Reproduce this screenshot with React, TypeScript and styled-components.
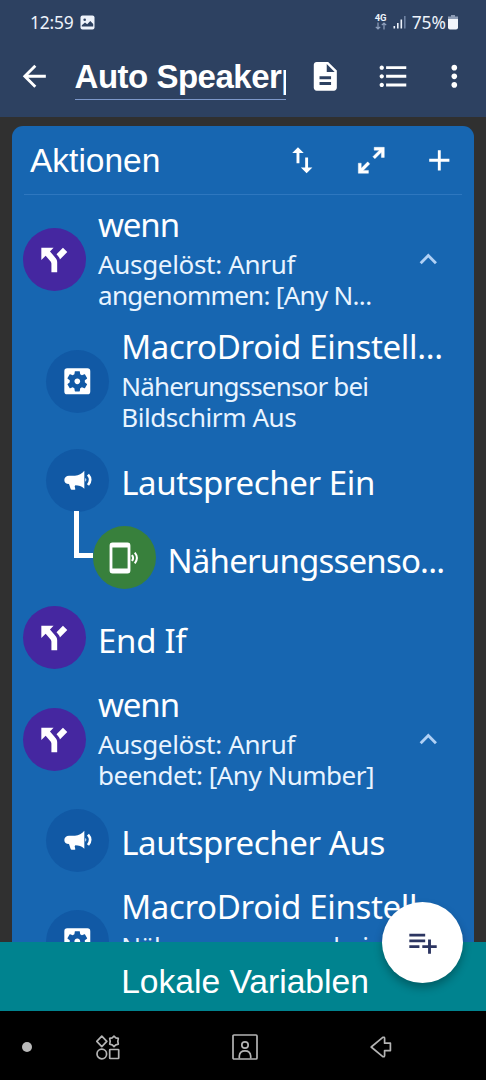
import React from 'react';
import styled, { createGlobalStyle } from 'styled-components';
import {
  MdAdd,
  MdArrowBack,
  MdDescription,
  MdExpandLess,
  MdFormatListBulleted,
  MdImportExport,
  MdMoreVert,
  MdPlaylistAdd,
  MdSettingsApplications,
} from 'react-icons/md';

const GlobalStyle = createGlobalStyle`
  * { box-sizing: border-box; }
  body { margin: 0; background: #000; }
  svg { display: block; flex: none; }
`;

const Screen = styled.div`
  position: relative;
  width: 486px;
  height: 1080px;
  display: flex;
  flex-direction: column;
  overflow: hidden;
  background: #303030;
  color: #fff;
  font-family: 'Noto Sans', sans-serif;
`;

const Header = styled.header`
  flex: none;
  height: 117px;
  background: #2d4161;
`;

const StatusBar = styled.div`
  display: flex;
  align-items: center;
  justify-content: space-between;
  height: 38px;
  padding: 6px 28px 0 30px;
  font-size: 17.4px;
  line-height: 24px;
  color: #eef3fb;
`;

const StatusGroup = styled.div`
  display: flex;
  align-items: center;
  gap: 7px;
`;

const Clock = styled.span`
  letter-spacing: -0.2px;
`;

const Percent = styled.span`
  margin: 0 -5px 0 -2px;
`;

const Network = styled.span`
  display: flex;
  flex-direction: column;
  align-items: center;
  width: 14px;
  margin: 0 -2px 0 0;
  font: bold 9.5px/8px Roboto, sans-serif;
`;

const Toolbar = styled.div`
  display: flex;
  align-items: center;
  height: 77px;
  padding: 0 14px 0 17px;
`;

const TitleField = styled.div`
  width: 211px;
  height: 47px;
  margin: 0 22px 0 23px;
  overflow: hidden;
  white-space: nowrap;
  border-bottom: 1.5px solid #7c97c9;
  font: bold 33px/48px 'Liberation Sans', sans-serif;
  letter-spacing: -0.5px;
`;

const ToolbarIcons = styled.div`
  display: flex;
  align-items: center;
  gap: 34px;
  svg:last-child { margin-left: -8px; }
`;

const Main = styled.main`
  flex: 1;
  min-height: 0;
  padding: 8.5px 12px 0;
  overflow: hidden;
`;

const Card = styled.section`
  height: 900px;
  border-radius: 11px;
  background: #1766b1;
`;

const CardHeader = styled.div`
  display: flex;
  align-items: center;
  justify-content: space-between;
  height: 69.5px;
  margin: 0 12px;
  padding: 0 5px 0 6px;
  border-bottom: 1px solid #2e77bf;
`;

const CardTitle = styled.h2`
  margin: 0;
  padding-top: 2px;
  font: 33.5px/40px 'Liberation Sans', sans-serif;
`;

const CardTools = styled.div`
  display: flex;
  gap: 34px;
  padding-top: 1px;
`;

const List = styled.div`
  padding-top: 3px;
`;

const Row = styled.div<{ $height: number; $level: number }>`
  position: relative;
  display: flex;
  align-items: center;
  height: ${(p) => p.$height}px;
  padding-left: ${(p) => 11 + p.$level * 23.2}px;
`;

const Badge = styled.div<{ $color: string }>`
  display: flex;
  align-items: center;
  justify-content: center;
  flex: none;
  width: 63px;
  height: 63px;
  margin-right: 12px;
  border-radius: 50%;
  background: ${(p) => p.$color};
`;

const Texts = styled.div<{ $double: boolean }>`
  flex: 1;
  min-width: 0;
  white-space: nowrap;
  padding: ${(p) => (p.$double ? '0 0 7px' : '5px 0 0')};
`;

const RowTitle = styled.div<{ $spacing: number }>`
  font-size: 33px;
  line-height: 49px;
  letter-spacing: ${(p) => p.$spacing}px;
`;

const RowDetail = styled.div<{ $spacing: number }>`
  font-size: 26px;
  line-height: 31px;
  color: #e9f4ff;
  letter-spacing: ${(p) => p.$spacing}px;
`;

const Chevron = styled.div`
  margin-right: 28px;
  color: #b0d0f5;
`;

const Connector = styled.div`
  position: absolute;
  left: 62px;
  top: -7px;
  width: 19px;
  height: 47px;
  border: solid #fff;
  border-width: 0 0 5px 5px;
`;

const LocalVariables = styled.footer`
  flex: none;
  height: 69px;
  background: #00838f;
  padding: 1px 0 0 4px;
  text-align: center;
  font: 33.6px/78px 'Liberation Sans', sans-serif;
`;

const Fab = styled.button`
  position: absolute;
  left: 382px;
  top: 902px;
  width: 81px;
  height: 81px;
  padding: 0;
  display: flex;
  align-items: center;
  justify-content: center;
  border: 0;
  border-radius: 50%;
  background: #fff;
  color: #2c3561;
  box-shadow: 0 5px 9px rgba(0, 0, 0, 0.28);
`;

const NavBar = styled.nav`
  flex: none;
  display: flex;
  align-items: center;
  height: 69px;
  padding: 3px 0 0 22px;
  background: #000;
  svg { fill: none; stroke: #b4b4b4; stroke-width: 1.7; }
`;

const NavDot = styled.span`
  width: 10px;
  height: 10px;
  margin-right: 64px;
  border-radius: 50%;
  background: #bababa;
`;

const NavIcons = styled.div`
  display: flex;
  align-items: center;
  gap: 112px;
`;

const ICON = 34.6;

const ForkIcon = () => (
  <svg width={ICON} height={ICON} viewBox="0 0 24 24" fill="#fff">
    <path d="M3,4V12.5L6,9.5L9,13C10,14 10,15 10,15V21H14V14C14,14 14,13 13.47,12C12.94,11 12,10 12,10L9,6.58L11.5,4M18,4L13.54,8.47L14,9C14,9 14.93,10 15.47,11C15.68,11.4 15.8,11.79 15.87,12.13L21,7" />
  </svg>
);

const MegaphoneIcon = () => (
  <svg width="28" height="20" viewBox="0 0 84 60" fill="#fff">
    <path d="M61 2V56C53 48 44 46 34 46L32 49L34 58Q34 59 32 59H23Q21 59 20 57L15 42C6 42 1 38 1 30C1 22 7 17 15 17H33C44 16 54 11 61 2Z" />
    <path d="M64 24Q70 29 64 35Z" />
    <path d="M72 14Q85 29 72 45" fill="none" stroke="#fff" strokeWidth="8" />
  </svg>
);

const PhoneWavesIcon = () => (
  <svg width="30" height="32" viewBox="0 0 30 32" fill="none" stroke="#fff">
    <rect x="2" y="2" width="18" height="28" rx="1.5" strokeWidth="2.8" />
    <path d="M1.5 3.5H20.5M1.5 28.5H20.5" strokeWidth="4" />
    <path d="M23 13Q25.2 16 23 19" strokeWidth="2" />
    <path d="M25.8 10.7Q30 16 25.8 21.3" strokeWidth="2" />
  </svg>
);

const ExpandIcon = () => (
  <svg width={ICON} height={ICON} viewBox="0 0 24 24" fill="#fff" stroke="#fff" strokeWidth="0.3">
    <path d="M10,21V19H6.41L10.91,14.5L9.5,13.09L5,17.59V14H3V21H10M14.5,10.91L19,6.41V10H21V3H14V5H17.59L13.09,9.5L14.5,10.91Z" />
  </svg>
);

const PictureIcon = () => (
  <svg width="15" height="15" viewBox="0 0 15 15">
    <rect x="0.5" y="0.5" width="14" height="14" rx="2" fill="#eef3fb" />
    <circle cx="4.7" cy="4.8" r="1.3" fill="#2d4161" />
    <path d="M1.8 10.2L5 7.6L7.2 9.3L10.3 6L13.2 9V11.5H1.8Z" fill="#2d4161" />
  </svg>
);

const DataArrows = () => (
  <svg width="12" height="8" viewBox="0 0 12 8" fill="none" stroke="#8fa0bd" strokeWidth="1.2">
    <path d="M3 0.5V7M0.8 4.8L3 7L5.2 4.8M9 7.5V1M6.8 3.2L9 1L11.2 3.2" />
  </svg>
);

const SignalIcon = () => (
  <svg width="14" height="14" viewBox="0 0 14 14" fill="#eef3fb">
    <rect x="0.5" y="11" width="1.6" height="2.5" />
    <rect x="4" y="8" width="1.6" height="5.5" />
    <rect x="7.5" y="4.5" width="1.6" height="9" />
    <rect x="11" y="1" width="1.6" height="12.5" fill="#6f83a3" />
  </svg>
);

const BatteryIcon = () => (
  <svg width="10" height="15" viewBox="0 0 10 15">
    <path d="M3 0H7V1.5H10V4H0V1.5H3Z" fill="#8c9bb5" />
    <path d="M0 4H10V12.5Q10 14.5 8 14.5H2Q0 14.5 0 12.5Z" fill="#f2f5fa" />
  </svg>
);

const AppsIcon = () => (
  <svg width="24" height="25" viewBox="0 0 24 25" strokeLinejoin="round">
    <path d="M5.8 1.2L10.8 6.4L5.8 11.6L0.8 6.4Z" />
    <path d="M18 1.2L19.8 2.8L22.3 3.4L21.8 6.4L22.3 9.2L19.8 9.9L18 11.5L16.2 9.9L13.7 9.2L14.2 6.4L13.7 3.4L16.2 2.8Z" />
    <circle cx="5.8" cy="19" r="4.8" />
    <rect x="13.7" y="14.5" width="9" height="9" rx="0.6" />
  </svg>
);

const ContactIcon = () => (
  <svg width="26" height="26" viewBox="0 0 26 26">
    <rect x="1" y="1" width="24" height="24" rx="1" />
    <circle cx="13" cy="11" r="3.2" />
    <path d="M7.3 24.5V22Q7.8 16.8 13 16.8T18.7 22V24.5" />
  </svg>
);

const BackIcon = () => (
  <svg width="22" height="22" viewBox="0 0 22 22" strokeLinejoin="round">
    <path d="M1.2 11L12.8 1.4Q14.6 0.8 14.6 2.4V7.2H20.4V14.6H14.6V19.6Q14.6 21.2 12.8 20.6Z" />
  </svg>
);

const kinds = {
  fork: { color: '#4527a0', icon: <ForkIcon /> },
  gear: { color: '#1159a5', icon: <MdSettingsApplications size={ICON} /> },
  speaker: { color: '#1159a5', icon: <MegaphoneIcon /> },
  sensor: { color: '#38803c', icon: <PhoneWavesIcon /> },
};

interface Action {
  kind: keyof typeof kinds;
  level: number;
  height: number;
  title: string;
  spacing: number;
  details?: [string, number][];
  collapsible?: boolean;
  linked?: boolean;
}

const actions: Action[] = [
  { kind: 'fork', level: 0, height: 122, title: 'wenn', spacing: -1.1, collapsible: true, details: [['Ausgelöst: Anruf', -0.32], ['angenommen: [Any N...', -0.7]] },
  { kind: 'gear', level: 1, height: 122, title: 'MacroDroid Einstell...', spacing: -0.33, details: [['Näherungssensor bei', -0.82], ['Bildschirm Aus', -0.42]] },
  { kind: 'speaker', level: 1, height: 76, title: 'Lautsprecher Ein', spacing: -0.4 },
  { kind: 'sensor', level: 3, height: 79, title: 'Näherungssenso...', spacing: -0.8, linked: true },
  { kind: 'fork', level: 0, height: 81, title: 'End If', spacing: -0.3 },
  { kind: 'fork', level: 0, height: 122, title: 'wenn', spacing: -1.1, collapsible: true, details: [['Ausgelöst: Anruf', -0.32], ['beendet: [Any Number]', -0.5]] },
  { kind: 'speaker', level: 1, height: 80, title: 'Lautsprecher Aus', spacing: -0.4 },
  { kind: 'gear', level: 1, height: 122, title: 'MacroDroid Einstell...', spacing: -0.33, details: [['Näherungssensor bei', -0.82], ['Bildschirm Aus', -0.42]] },
];

const ActionRow = ({ action }: { action: Action }) => (
  <Row $height={action.height} $level={action.level}>
    {action.linked && <Connector />}
    <Badge $color={kinds[action.kind].color}>{kinds[action.kind].icon}</Badge>
    <Texts $double={!!action.details}>
      <RowTitle $spacing={action.spacing}>{action.title}</RowTitle>
      {action.details?.map(([text, spacing]) => (
        <RowDetail key={text} $spacing={spacing}>{text}</RowDetail>
      ))}
    </Texts>
    {action.collapsible && (
      <Chevron>
        <MdExpandLess size={ICON} />
      </Chevron>
    )}
  </Row>
);

export default function App() {
  return (
    <Screen>
      <GlobalStyle />
      <Header>
        <StatusBar>
          <StatusGroup>
            <Clock>12:59</Clock>
            <PictureIcon />
          </StatusGroup>
          <StatusGroup>
            <Network>
              4G
              <DataArrows />
            </Network>
            <SignalIcon />
            <Percent>75%</Percent>
            <BatteryIcon />
          </StatusGroup>
        </StatusBar>
        <Toolbar>
          <MdArrowBack size={ICON} />
          <TitleField>Auto Speakerphone</TitleField>
          <ToolbarIcons>
            <MdDescription size={ICON} />
            <MdFormatListBulleted size={ICON} />
            <MdMoreVert size={ICON} />
          </ToolbarIcons>
        </Toolbar>
      </Header>
      <Main>
        <Card>
          <CardHeader>
            <CardTitle>Aktionen</CardTitle>
            <CardTools>
              <MdImportExport size={ICON} />
              <ExpandIcon />
              <MdAdd size={ICON} />
            </CardTools>
          </CardHeader>
          <List>
            {actions.map((action, i) => (
              <ActionRow key={i} action={action} />
            ))}
          </List>
        </Card>
      </Main>
      <LocalVariables>Lokale Variablen</LocalVariables>
      <NavBar>
        <NavDot />
        <NavIcons>
          <AppsIcon />
          <ContactIcon />
          <BackIcon />
        </NavIcons>
      </NavBar>
      <Fab>
        <MdPlaylistAdd size={ICON} />
      </Fab>
    </Screen>
  );
}
